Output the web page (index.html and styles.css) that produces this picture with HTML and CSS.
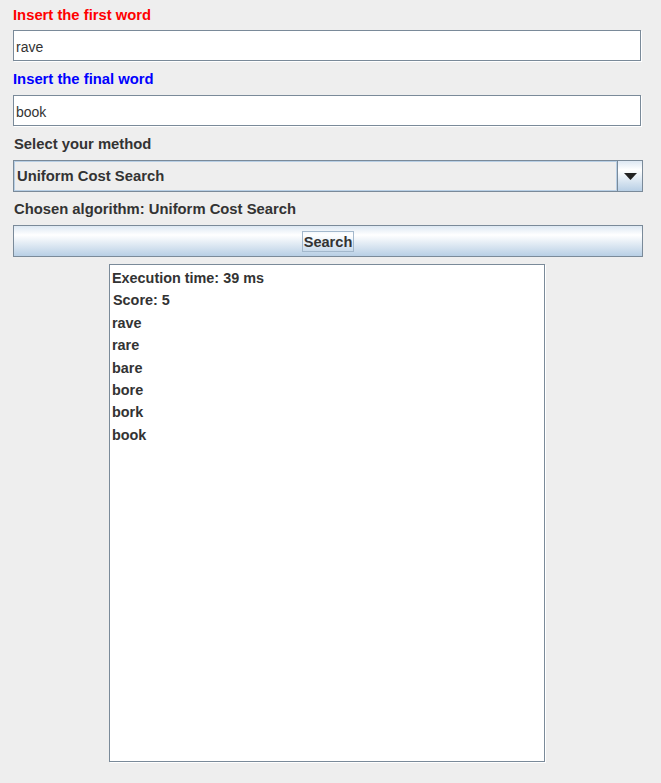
FILE: index.html
```html
<!DOCTYPE html>
<html>
<head>
<meta charset="utf-8">
<link rel="stylesheet" href="styles.css">
</head>
<body>
<div class="form">
  <div class="label label-first red">Insert the first word</div>
  <div class="field">rave</div>
  <div class="label blue">Insert the final word</div>
  <div class="field">book</div>
  <div class="label">Select your method</div>
  <div class="combo">
    <div class="combo-value">Uniform Cost Search</div>
    <div class="combo-arrow">
      <svg width="13" height="7" viewBox="0 0 13 7"><path d="M0 0H13L6.5 7Z" fill="#222"/></svg>
    </div>
  </div>
  <div class="label">Chosen algorithm: Uniform Cost Search</div>
  <div class="button"><span class="button-text">Search</span></div>
  <div class="result">
    <div class="line">Execution time: 39 ms</div>
    <div class="line indent">Score: 5</div>
    <div class="line">rave</div>
    <div class="line">rare</div>
    <div class="line">bare</div>
    <div class="line">bore</div>
    <div class="line">bork</div>
    <div class="line">book</div>
  </div>
</div>
</body>
</html>
```

FILE: styles.css
```css
html, body {
  margin: 0;
  padding: 0;
  background: #eeeeee;
}
body {
  width: 661px;
  height: 783px;
  overflow: hidden;
  font-family: "Liberation Sans", Arial, sans-serif;
  color: #333333;
}
.form {
  display: flex;
  flex-direction: column;
  padding: 0 18px 0 13px;
}
.label {
  box-sizing: border-box;
  height: 33px;
  padding-top: 1px;
  line-height: 32px;
  font-size: 14.8px;
  font-weight: bold;
  padding-left: 1px;
  white-space: nowrap;
}
.label-first {
  height: 30px;
  padding-top: 0;
  line-height: 30px;
}
.red { color: #ff0000; padding-left: 0; }
.blue { color: #0000ff; padding-left: 0; }
.field {
  box-sizing: border-box;
  width: 628px;
  height: 31px;
  margin-bottom: 1px;
  border: 1px solid #7a8a99;
  background: #ffffff;
  box-shadow: 1px 1px 0 #ffffff;
  padding: 3px 2px 0 2px;
  line-height: 26px;
  font-size: 14px;
  color: #333333;
}
.combo {
  box-sizing: border-box;
  width: 630px;
  height: 32px;
  border: 1px solid #7a8a99;
  display: flex;
}
.combo-value {
  flex: 1;
  border: 1px solid #b8cfe5;
  background: #eeeeee;
  padding: 1px 0 0 2px;
  line-height: 27px;
  font-size: 14.8px;
  font-weight: bold;
}
.combo-arrow {
  width: 24px;
  border-left: 1px solid #7a8a99;
  background: linear-gradient(to bottom, #dde8f3 0%, #ffffff 30%, #b8cfe5 100%);
  display: flex;
  align-items: center;
  justify-content: center;
}
.button {
  box-sizing: border-box;
  width: 630px;
  height: 32px;
  border: 1px solid #7a8a99;
  background: linear-gradient(to bottom, #dde8f3 0%, #ffffff 30%, #b8cfe5 100%);
  display: flex;
  align-items: center;
  justify-content: center;
}
.button-text {
  border: 1px solid #a3b8cc;
  padding: 1px 1px 0 1px;
  line-height: 18px;
  font-size: 14.6px;
  font-weight: bold;
  color: #333333;
}
.result {
  box-sizing: border-box;
  align-self: flex-start;
  margin-left: 96px;
  margin-top: 7px;
  width: 436px;
  height: 498px;
  border: 1px solid #7a8a99;
  background: #ffffff;
  box-shadow: 1px 1px 0 #ffffff;
  padding: 2px 2px 1px 2px;
}
.line {
  height: 22.4px;
  line-height: 22.4px;
  font-size: 14.4px;
  font-weight: bold;
  white-space: nowrap;
}
.indent { padding-left: 1px; }
```
